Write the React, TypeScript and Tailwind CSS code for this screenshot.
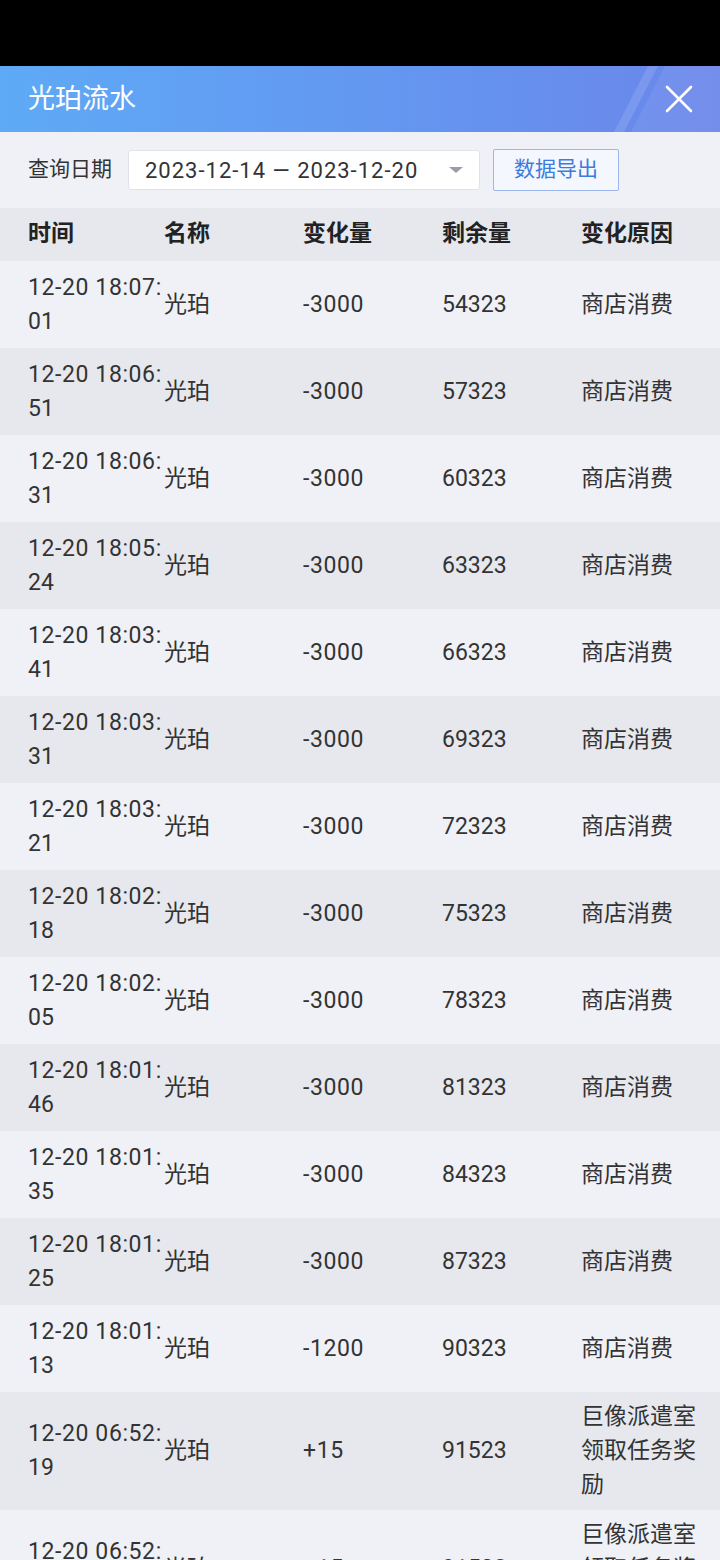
import React from 'react'

type Row = {
  date: string
  sec: string
  change: string
  left: string
  reason: string
}

const FONT = { fontFamily: 'Roboto, "Noto Sans CJK SC", sans-serif' }

const rows: Row[] = [
  { date: '12-20 18:07:', sec: '01', change: '-3000', left: '54323', reason: '商店消费' },
  { date: '12-20 18:06:', sec: '51', change: '-3000', left: '57323', reason: '商店消费' },
  { date: '12-20 18:06:', sec: '31', change: '-3000', left: '60323', reason: '商店消费' },
  { date: '12-20 18:05:', sec: '24', change: '-3000', left: '63323', reason: '商店消费' },
  { date: '12-20 18:03:', sec: '41', change: '-3000', left: '66323', reason: '商店消费' },
  { date: '12-20 18:03:', sec: '31', change: '-3000', left: '69323', reason: '商店消费' },
  { date: '12-20 18:03:', sec: '21', change: '-3000', left: '72323', reason: '商店消费' },
  { date: '12-20 18:02:', sec: '18', change: '-3000', left: '75323', reason: '商店消费' },
  { date: '12-20 18:02:', sec: '05', change: '-3000', left: '78323', reason: '商店消费' },
  { date: '12-20 18:01:', sec: '46', change: '-3000', left: '81323', reason: '商店消费' },
  { date: '12-20 18:01:', sec: '35', change: '-3000', left: '84323', reason: '商店消费' },
  { date: '12-20 18:01:', sec: '25', change: '-3000', left: '87323', reason: '商店消费' },
  { date: '12-20 18:01:', sec: '13', change: '-1200', left: '90323', reason: '商店消费' },
  { date: '12-20 06:52:', sec: '19', change: '+15', left: '91523', reason: '巨像派遣室领取任务奖励' },
  { date: '12-20 06:52:', sec: '10', change: '+15', left: '91508', reason: '巨像派遣室领取任务奖励' },
]

function TableRow({ row, dark }: { row: Row; dark: boolean }) {
  return (
    <div
      className={`grid grid-cols-[136px_139px_139px_139px_1fr] items-center min-h-[87px] pl-7 pr-[18px] py-2 text-[23px] leading-[34px] text-[#333] ${
        dark ? 'bg-[#e6e8ee]' : 'bg-[#eff1f7]'
      }`}
    >
      <div>
        <div className="whitespace-nowrap tracking-[0.6px]">{row.date}</div>
        <div>{row.sec}</div>
      </div>
      <div>光珀</div>
      <div className="tracking-[0.6px]">{row.change}</div>
      <div>{row.left}</div>
      <div className="break-all">{row.reason}</div>
    </div>
  )
}

export default function App() {
  return (
    <div className="w-[720px] min-h-[1560px] bg-black" style={FONT}>
      <div className="h-[66px] bg-black" />

      {/* title bar */}
      <div className="relative h-[66px] flex items-center px-7 bg-gradient-to-r from-[#5eaaf6] via-[#6398f1] to-[#6a86ea] overflow-hidden">
        <svg className="absolute inset-0" width="720" height="66" viewBox="0 0 720 66">
          <polygon points="648,0 658,0 624,66 614,66" fill="#ffffff" fillOpacity="0.12" />
          <polygon points="665,0 720,0 720,66 631,66" fill="#ffffff" fillOpacity="0.07" />
        </svg>
        <span className="relative text-[27px] text-white">光珀流水</span>
        <svg className="absolute left-[664px] top-[19px]" width="30" height="28" viewBox="0 0 30 28">
          <path d="M3 2 L27 26 M27 2 L3 26" stroke="#ffffff" strokeWidth="2.6" strokeLinecap="round" />
        </svg>
      </div>

      {/* filter bar */}
      <div className="h-[76px] flex items-center pl-7 bg-[#eff1f7]">
        <span className="text-[21px] text-[#333]">查询日期</span>
        <div className="ml-4 w-[352px] h-[40px] flex items-center pl-4 pr-4 bg-white border border-[#dfe2ea] rounded-[3px]">
          <span className="text-[22px] tracking-[1px] text-[#333] whitespace-nowrap">
            2023-12-14 — 2023-12-20
          </span>
          <svg className="ml-auto" width="14" height="7" viewBox="0 0 14 7">
            <polygon points="0,0 14,0 7,6" fill="#9a9ea8" />
          </svg>
        </div>
        <button className="ml-[13px] w-[126px] h-[42px] flex items-center justify-center border border-[#9cb6ee] bg-[#f4f7fd] rounded-[2px] text-[21px] text-[#3c7be0]">
          数据导出
        </button>
      </div>

      {/* table header */}
      <div className="grid grid-cols-[136px_139px_139px_139px_1fr] items-center h-[53px] pl-7 pr-[18px] bg-[#e6e8ee] text-[23px] font-bold text-[#222]">
        <div>时间</div>
        <div>名称</div>
        <div>变化量</div>
        <div>剩余量</div>
        <div>变化原因</div>
      </div>

      {rows.map((row, i) => (
        <TableRow key={i} row={row} dark={i % 2 === 1} />
      ))}
    </div>
  )
}
